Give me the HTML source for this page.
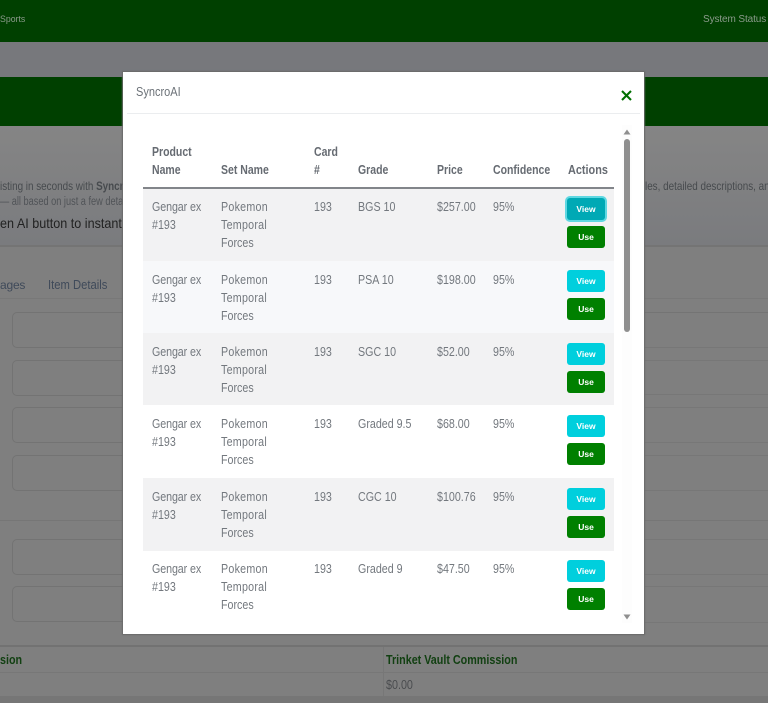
<!DOCTYPE html>
<html><head><meta charset="utf-8"><style>
html,body{margin:0;padding:0}
body{width:768px;height:703px;overflow:hidden;position:relative;background:#7f7f7f;font-family:"Liberation Sans",sans-serif}
div{position:absolute;white-space:nowrap}
.t,.h,.c{transform-origin:0 0}
.t{font-size:12.5px;line-height:18px;color:#73787e;transform:scaleX(.855)}
.t.p{letter-spacing:.3px}
.t.g{letter-spacing:-.1px}
.h{font-size:12.5px;line-height:18px;font-weight:bold;color:#666b72;transform:scaleX(.84)}
.v,.u{left:567px;width:38px;height:22px;border-radius:3px;color:#fff;font-size:8.5px;font-weight:bold;line-height:22px;text-align:center}
.v{background:#00cfdd}.u{background:#008000}
.l{background:#777;height:1px}
.box{left:12px;width:120px;height:34px;border:1px solid #737373;border-radius:5px}
</style></head><body>
<div style="left:0;top:0;width:768px;height:42px;background:#004000"></div>
<div class="c" style="left:0;top:14px;font-size:9.5px;line-height:12px;color:#8a9a8a;transform:scaleX(.92)">Sports</div>
<div style="left:703px;top:13px;font-size:10px;line-height:13px;color:#8a9a8a;letter-spacing:-.1px">System Status</div>
<div style="left:0;top:42px;width:768px;height:35px;background:#77787c"></div>
<div style="left:0;top:77px;width:768px;height:49px;background:#004000"></div>
<div style="left:0;top:126px;width:768px;height:119px;background:linear-gradient(#858585,#7a7b7e)"></div>
<div style="left:0;top:245px;width:768px;height:2px;background:#747474"></div>
<div class="c" style="left:0;top:179px;font-size:12px;line-height:14px;color:#474a4e;transform:scaleX(.823)">isting in seconds with <b>Syncro</b></div>
<div class="c" style="left:0;top:195px;font-size:11.5px;line-height:14px;color:#505357;transform:scaleX(.8)">— all based on just a few deta</div>
<div class="c" style="left:0;top:215px;font-size:14px;line-height:16px;color:#222;transform:scaleX(.9)">en AI button to instant</div>
<div class="c" style="left:645px;top:179px;font-size:12px;line-height:14px;color:#474a4e;transform:scaleX(.823)">les, detailed descriptions, an</div>
<div style="left:0;top:278px;font-size:12px;line-height:14px;color:#3f4a5a;letter-spacing:-.2px">ages</div>
<div class="c" style="left:48px;top:278px;font-size:12.5px;line-height:14px;color:#3f4a5a;transform:scaleX(.9)">Item Details</div>
<div class="l" style="left:0;top:298px;width:768px;background:#787878"></div>
<div class="box" style="top:312px"></div>
<div class="box" style="top:360px"></div>
<div class="box" style="top:407px"></div>
<div class="box" style="top:455px"></div>
<div class="l" style="left:0;top:520px;width:768px;background:#767676"></div>
<div class="box" style="top:539px"></div>
<div class="box" style="top:586px"></div>
<div class="l" style="left:640px;top:312px;width:128px;background:#747474"></div>
<div class="l" style="left:640px;top:347px;width:128px"></div>
<div class="l" style="left:640px;top:360px;width:128px"></div>
<div class="l" style="left:640px;top:394px;width:128px"></div>
<div class="l" style="left:640px;top:407px;width:128px"></div>
<div class="l" style="left:640px;top:442px;width:128px"></div>
<div class="l" style="left:640px;top:455px;width:128px"></div>
<div class="l" style="left:640px;top:490px;width:128px"></div>
<div class="l" style="left:640px;top:539px;width:128px"></div>
<div class="l" style="left:640px;top:574px;width:128px"></div>
<div class="l" style="left:640px;top:586px;width:128px"></div>
<div class="l" style="left:640px;top:622px;width:128px"></div>
<div style="left:0;top:645px;width:768px;height:2px;background:#727272"></div>
<div class="l" style="left:0;top:672px;width:768px;background:#777"></div>
<div style="left:0;top:696px;width:768px;height:7px;background:#767676"></div>
<div style="left:383px;top:647px;width:1px;height:49px;background:#777"></div>
<div class="c" style="left:0;top:653px;font-size:12.5px;line-height:14px;font-weight:bold;color:#124012;transform:scaleX(.86)">sion</div>
<div class="c" style="left:386px;top:653px;font-size:12.5px;line-height:14px;font-weight:bold;color:#124012;transform:scaleX(.86)">Trinket Vault Commission</div>
<div class="c" style="left:386px;top:678px;font-size:12.5px;line-height:14px;color:#4a4c4f;transform:scaleX(.86)">$0.00</div>

<div style="left:123px;top:72px;width:521px;height:562px;background:#fff;box-shadow:0 0 1px 1px #6a6a6a"></div>
<div class="c" style="left:136px;top:85px;font-size:12.5px;line-height:15px;color:#6c7278;transform:scaleX(.88)">SyncroAI</div>
<div class="l" style="left:127px;top:113px;width:513px;background:#ebedef"></div>
<svg style="position:absolute;left:620px;top:89px" width="13" height="13" viewBox="0 0 13 13"><path d="M2 2L11 11M11 2L2 11" stroke="#007000" stroke-width="2.1" fill="none"/></svg>

<div class="h" style="left:152px;top:143px">Product</div><div class="h" style="left:152px;top:161px">Name</div>
<div class="h" style="left:221px;top:161px">Set Name</div>
<div class="h" style="left:314px;top:143px">Card</div><div class="h" style="left:314px;top:161px">#</div>
<div class="h" style="left:358px;top:161px">Grade</div>
<div class="h" style="left:437px;top:161px">Price</div>
<div class="h" style="left:493px;top:161px">Confidence</div>
<div class="h" style="left:567.5px;top:161px;transform:scaleX(.87)">Actions</div>
<div style="left:143px;top:187px;width:471px;height:2px;background:#82858a"></div>

<div style="left:143px;top:189px;width:471px;height:72px;background:#f2f2f3"></div>
<div style="left:143px;top:261px;width:471px;height:72px;background:#f7f8fa"></div>
<div style="left:143px;top:333px;width:471px;height:72px;background:#f2f2f3"></div>
<div style="left:143px;top:478px;width:471px;height:73px;background:#f2f2f3"></div>

<div class="t g" style="left:152px;top:198px">Gengar ex</div><div class="t" style="left:152px;top:216px">#193</div>
<div class="t p" style="left:221px;top:198px">Pokemon</div><div class="t p" style="left:221px;top:216px">Temporal</div><div class="t" style="left:221px;top:234px">Forces</div>
<div class="t" style="left:314px;top:198px">193</div><div class="t" style="left:358px;top:198px">BGS 10</div><div class="t" style="left:437px;top:198px">$257.00</div><div class="t" style="left:493px;top:198px">95%</div>
<div class="v" style="top:198px;background:#00a9b5;box-shadow:0 0 0 2px #5fd8e2">View</div><div class="u" style="top:226px">Use</div>

<div class="t g" style="left:152px;top:271px">Gengar ex</div><div class="t" style="left:152px;top:289px">#193</div>
<div class="t p" style="left:221px;top:271px">Pokemon</div><div class="t p" style="left:221px;top:289px">Temporal</div><div class="t" style="left:221px;top:307px">Forces</div>
<div class="t" style="left:314px;top:271px">193</div><div class="t" style="left:358px;top:271px">PSA 10</div><div class="t" style="left:437px;top:271px">$198.00</div><div class="t" style="left:493px;top:271px">95%</div>
<div class="v" style="top:270px">View</div><div class="u" style="top:298px">Use</div>

<div class="t g" style="left:152px;top:343px">Gengar ex</div><div class="t" style="left:152px;top:361px">#193</div>
<div class="t p" style="left:221px;top:343px">Pokemon</div><div class="t p" style="left:221px;top:361px">Temporal</div><div class="t" style="left:221px;top:379px">Forces</div>
<div class="t" style="left:314px;top:343px">193</div><div class="t" style="left:358px;top:343px">SGC 10</div><div class="t" style="left:437px;top:343px">$52.00</div><div class="t" style="left:493px;top:343px">95%</div>
<div class="v" style="top:343px">View</div><div class="u" style="top:371px">Use</div>

<div class="t g" style="left:152px;top:415px">Gengar ex</div><div class="t" style="left:152px;top:433px">#193</div>
<div class="t p" style="left:221px;top:415px">Pokemon</div><div class="t p" style="left:221px;top:433px">Temporal</div><div class="t" style="left:221px;top:451px">Forces</div>
<div class="t" style="left:314px;top:415px">193</div><div class="t" style="left:358px;top:415px">Graded 9.5</div><div class="t" style="left:437px;top:415px">$68.00</div><div class="t" style="left:493px;top:415px">95%</div>
<div class="v" style="top:415px">View</div><div class="u" style="top:443px">Use</div>

<div class="t g" style="left:152px;top:488px">Gengar ex</div><div class="t" style="left:152px;top:506px">#193</div>
<div class="t p" style="left:221px;top:488px">Pokemon</div><div class="t p" style="left:221px;top:506px">Temporal</div><div class="t" style="left:221px;top:524px">Forces</div>
<div class="t" style="left:314px;top:488px">193</div><div class="t" style="left:358px;top:488px">CGC 10</div><div class="t" style="left:437px;top:488px">$100.76</div><div class="t" style="left:493px;top:488px">95%</div>
<div class="v" style="top:488px">View</div><div class="u" style="top:516px">Use</div>

<div class="t g" style="left:152px;top:560px">Gengar ex</div><div class="t" style="left:152px;top:578px">#193</div>
<div class="t p" style="left:221px;top:560px">Pokemon</div><div class="t p" style="left:221px;top:578px">Temporal</div><div class="t" style="left:221px;top:596px">Forces</div>
<div class="t" style="left:314px;top:560px">193</div><div class="t" style="left:358px;top:560px">Graded 9</div><div class="t" style="left:437px;top:560px">$47.50</div><div class="t" style="left:493px;top:560px">95%</div>
<div class="v" style="top:560px">View</div><div class="u" style="top:588px">Use</div>

<div style="left:622px;top:125px;width:10px;height:498px;background:#fdfdfd"></div>
<div style="left:624px;top:139px;width:6px;height:193px;background:#8f8f8f;border-radius:3px"></div>
<svg style="position:absolute;left:622px;top:128px" width="10" height="8"><path d="M1.5 6.5L5 1.5L8.5 6.5Z" fill="#8f8f8f"/></svg>
<svg style="position:absolute;left:622px;top:613px" width="10" height="8"><path d="M1.5 1.5L8.5 1.5L5 6.5Z" fill="#8f8f8f"/></svg>
</body></html>
